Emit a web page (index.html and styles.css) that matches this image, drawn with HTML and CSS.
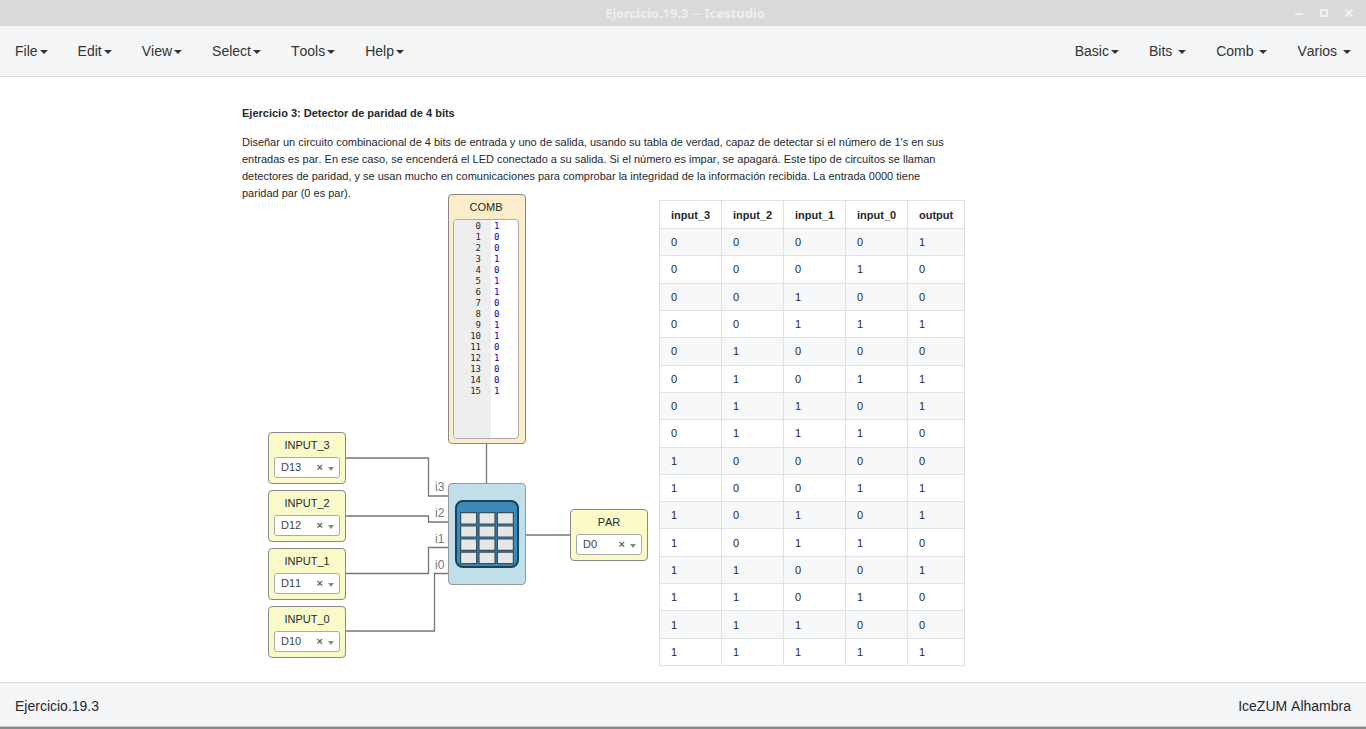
FILE: index.html
```html
<!DOCTYPE html>
<html lang="es">
<head>
<meta charset="utf-8">
<title>Ejercicio.19.3 ─ Icestudio</title>
<link rel="stylesheet" href="styles.css">
</head>
<body>
<header class="titlebar">
  <h1 class="titlebar-text">Ejercicio.19.3 ─ Icestudio</h1>
  <div class="window-controls">
    <button type="button" aria-label="Minimizar"><svg width="8" height="8" viewBox="0 0 8 8"><path d="M0 5h8" stroke="#f0f0f0" stroke-width="2"/></svg></button>
    <button type="button" aria-label="Maximizar"><svg width="8" height="8" viewBox="0 0 8 8"><rect x="1" y="1" width="6" height="6" fill="none" stroke="#f0f0f0" stroke-width="2"/></svg></button>
    <button type="button" aria-label="Cerrar"><svg width="8" height="8" viewBox="0 0 8 8"><path d="M.5.5l7 7M7.5.5L.5 7.500" stroke="#f0f0f0" stroke-width="2.200"/></svg></button>
  </div>
</header>
<nav class="menubar">
  <div class="menu-group">
    <button type="button" class="menu">File<span class="caret"></span></button>
    <button type="button" class="menu">Edit<span class="caret"></span></button>
    <button type="button" class="menu">View<span class="caret"></span></button>
    <button type="button" class="menu">Select<span class="caret"></span></button>
    <button type="button" class="menu">Tools<span class="caret"></span></button>
    <button type="button" class="menu">Help<span class="caret"></span></button>
  </div>
  <div class="menu-group">
    <button type="button" class="menu">Basic<span class="caret"></span></button>
    <button type="button" class="menu">Bits <span class="caret"></span></button>
    <button type="button" class="menu">Comb <span class="caret"></span></button>
    <button type="button" class="menu">Varios <span class="caret"></span></button>
  </div>
</nav>
<main class="canvas">
  <svg class="wires" aria-hidden="true">
    <path d="M345 381H428.500V419H449M345 439H428.500V445H449M345 496.500H428.500V470.500H449M345 554H434.500V496.500H449M486.500 367V407M525 458H571"/>
  </svg>

  <article class="note">
    <h2>Ejercicio 3: Detector de paridad de 4 bits</h2>
    <p>Diseñar un circuito combinacional de 4 bits de entrada y uno de salida, usando su tabla de verdad, capaz de detectar si el número de 1's en sus entradas es par. En ese caso, se encenderá el LED conectado a su salida. Si el número es impar, se apagará. Este tipo de circuitos se llaman detectores de paridad, y se usan mucho en comunicaciones para comprobar la integridad de la información recibida. La entrada 0000 tiene paridad par (0 es par).</p>
  </article>

  <section class="block memory">
    <label for="comb">COMB</label>
    <div class="editor">
      <pre class="gutter">0
1
2
3
4
5
6
7
8
9
10
11
12
13
14
15</pre>
      <textarea id="comb" spellcheck="false">1
0
0
1
0
1
1
0
0
1
1
0
1
0
0
1</textarea>
    </div>
  </section>

  <section class="block io input-3">
    <label for="in3">INPUT_3</label>
    <div class="pin"><select id="in3"><option>D13</option></select><button type="button" aria-label="Quitar D13">×</button><span class="arrow"></span></div>
  </section>
  <section class="block io input-2">
    <label for="in2">INPUT_2</label>
    <div class="pin"><select id="in2"><option>D12</option></select><button type="button" aria-label="Quitar D12">×</button><span class="arrow"></span></div>
  </section>
  <section class="block io input-1">
    <label for="in1">INPUT_1</label>
    <div class="pin"><select id="in1"><option>D11</option></select><button type="button" aria-label="Quitar D11">×</button><span class="arrow"></span></div>
  </section>
  <section class="block io input-0">
    <label for="in0">INPUT_0</label>
    <div class="pin"><select id="in0"><option>D10</option></select><button type="button" aria-label="Quitar D10">×</button><span class="arrow"></span></div>
  </section>
  <section class="block io output">
    <label for="par">PAR</label>
    <div class="pin"><select id="par"><option>D0</option></select><button type="button" aria-label="Quitar D0">×</button><span class="arrow"></span></div>
  </section>

  <ul class="ports"><li>i3</li><li>i2</li><li>i1</li><li>i0</li></ul>
  <section class="block part">
    <svg width="64" height="68" viewBox="0 0 64 68" role="img" aria-label="Tabla">
      <rect x="1" y="1" width="62" height="66" rx="7" fill="#3a8bba" stroke="#1c4259" stroke-width="2"/>
      <path d="M5 12.500H59V64H5Z" fill="#377fa9"/>
      <g fill="#e6e6e6" stroke="#35505f" stroke-width="1.200">
        <path d="M5.600 12.600h16v11.400h-16zM24 12.600h16v11.400h-16zM42.400 12.600h16v11.400h-16z"/>
        <path d="M5.600 25.800h16v11.400h-16zM24 25.800h16v11.400h-16zM42.400 25.800h16v11.400h-16z"/>
        <path d="M5.600 39h16v11.400h-16zM24 39h16v11.400h-16zM42.400 39h16v11.400h-16z"/>
        <path d="M5.600 52.200h16v11.400h-16zM24 52.200h16v11.400h-16zM42.400 52.200h16v11.400h-16z"/>
      </g>
    </svg>
  </section>

  <table class="truth">
    <thead><tr><th>input_3</th><th>input_2</th><th>input_1</th><th>input_0</th><th>output</th></tr></thead>
    <tbody>
      <tr><td>0</td><td>0</td><td>0</td><td>0</td><td>1</td></tr>
      <tr><td>0</td><td>0</td><td>0</td><td>1</td><td>0</td></tr>
      <tr><td>0</td><td>0</td><td>1</td><td>0</td><td>0</td></tr>
      <tr><td>0</td><td>0</td><td>1</td><td>1</td><td>1</td></tr>
      <tr><td>0</td><td>1</td><td>0</td><td>0</td><td>0</td></tr>
      <tr><td>0</td><td>1</td><td>0</td><td>1</td><td>1</td></tr>
      <tr><td>0</td><td>1</td><td>1</td><td>0</td><td>1</td></tr>
      <tr><td>0</td><td>1</td><td>1</td><td>1</td><td>0</td></tr>
      <tr><td>1</td><td>0</td><td>0</td><td>0</td><td>0</td></tr>
      <tr><td>1</td><td>0</td><td>0</td><td>1</td><td>1</td></tr>
      <tr><td>1</td><td>0</td><td>1</td><td>0</td><td>1</td></tr>
      <tr><td>1</td><td>0</td><td>1</td><td>1</td><td>0</td></tr>
      <tr><td>1</td><td>1</td><td>0</td><td>0</td><td>1</td></tr>
      <tr><td>1</td><td>1</td><td>0</td><td>1</td><td>0</td></tr>
      <tr><td>1</td><td>1</td><td>1</td><td>0</td><td>0</td></tr>
      <tr><td>1</td><td>1</td><td>1</td><td>1</td><td>1</td></tr>
    </tbody>
  </table>
</main>
<footer class="statusbar"><span>Ejercicio.19.3</span><span>IceZUM Alhambra</span></footer>
</body>
</html>
```
FILE: styles.css
```css
* { box-sizing: border-box; }

body {
  margin: 0;
  min-height: 100vh;
  display: flex;
  flex-direction: column;
  background: #fff;
  color: #24292e;
  font: 14px/20px "Liberation Sans", Arial, sans-serif;
  font-kerning: none;
}

button {
  border: 0;
  padding: 0;
  background: none;
  color: inherit;
  font: inherit;
  font-kerning: none;
}

/* Window frame */
.titlebar {
  display: grid;
  grid-template-columns: 1fr auto 1fr;
  align-items: center;
  height: 26px;
  padding: 0 13px 0 17px;
  background: #d9d9d9;
}
.titlebar-text {
  grid-column: 2;
  margin: 0;
  color: #eee;
  font: bold 13px/26px "Noto Sans", sans-serif;
}
.window-controls {
  display: flex;
  justify-content: flex-end;
  gap: 17px;
}
.window-controls button { display: flex; }

/* Menus */
.menubar {
  display: flex;
  justify-content: space-between;
  border-bottom: 1px solid #d5d9dd;
  background: #f4f5f7;
  color: #333;
}
.menu-group { display: flex; }
.menu {
  padding: 15px;
  white-space: pre;
}
.caret {
  display: inline-block;
  margin-left: 2px;
  vertical-align: middle;
  border-top: 4px solid;
  border-left: 4px solid transparent;
  border-right: 4px solid transparent;
}

/* Free canvas: nodes carry their own coordinates */
.canvas {
  position: relative;
  flex: 1;
  min-height: 600px;
  font-size: 11px;
}
.wires {
  position: absolute;
  top: 0;
  left: 0;
  width: 100%;
  height: 100%;
  fill: none;
  stroke: #777;
  stroke-width: 1.300;
}
.note {
  position: absolute;
  top: 28px;
  left: 242px;
  width: 712px;
  line-height: 17px;
}
.note h2 {
  margin: 0 0 12px;
  font-size: 11px;
}
.note p { margin: 0; }

.block {
  position: absolute;
  width: 78px;
  border: 1px solid #888;
  border-radius: 4px;
}
.block label {
  display: block;
  line-height: 24px;
  text-align: center;
}
.io {
  height: 52px;
  padding: 0 5px;
  background: #fafac8;
}
.input-3 { top: 355px; left: 268px; }
.input-2 { top: 413px; left: 268px; }
.input-1 { top: 471px; left: 268px; }
.input-0 { top: 529px; left: 268px; }
.output { top: 432px; left: 570px; }

.pin {
  display: flex;
  align-items: center;
  height: 21px;
  padding: 0 5px 1px 6px;
  border: 1px solid #aaa;
  border-radius: 3px;
  background: #fff;
  color: #444;
}
.pin select {
  flex: 1;
  min-width: 0;
  padding: 0;
  border: 0;
  appearance: none;
  background: none;
  color: inherit;
  font: inherit;
  font-kerning: none;
}
.pin button {
  margin-right: 5px;
  color: #666;
  font-weight: bold;
}
.arrow {
  margin-top: 4px;
  border-top: 4px solid #888;
  border-left: 3px solid transparent;
  border-right: 3px solid transparent;
}

.memory {
  top: 117px;
  left: 448px;
  height: 250px;
  padding: 0 6px 4px 4px;
  display: flex;
  flex-direction: column;
  background: #fbedc9;
}
.editor {
  flex: 1;
  display: flex;
  overflow: hidden;
  border: 1px solid #aaa;
  border-radius: 4px;
  background: #fff;
}
.gutter,
.editor textarea {
  margin: 0;
  border: 0;
  font: 9px/11px "DejaVu Sans Mono", monospace;
}
.gutter {
  width: 37px;
  padding: 1px 10px 0 0;
  background: #eee;
  text-align: right;
}
.editor textarea {
  flex: 1;
  min-width: 0;
  padding: 1px 3px 0;
  resize: none;
  overflow: hidden;
  background: none;
  color: #00b;
}

.ports {
  position: absolute;
  top: 400px;
  left: 435px;
  display: grid;
  gap: 6px;
  margin: 0;
  padding: 0;
  list-style: none;
  color: #777;
  font-size: 12px;
}
.part {
  top: 406px;
  left: 448px;
  height: 102px;
  padding-bottom: 1px;
  display: flex;
  align-items: center;
  justify-content: center;
  border-color: #999;
  background: #c0dfea;
}

.truth {
  position: absolute;
  top: 123px;
  left: 659px;
  width: 306px;
  height: 466px;
  border-collapse: collapse;
  table-layout: fixed;
}
.truth th,
.truth td {
  padding: 0 0 0 11px;
  border: 1px solid #dfe2e5;
  text-align: left;
}
.truth th {
  width: 62px;
  height: 28px;
}
.truth th:last-child { width: 57px; }
.truth tbody tr:nth-child(odd) { background: #f6f8fa; }

.statusbar {
  display: flex;
  justify-content: space-between;
  height: 47px;
  padding: 13px 15px;
  border-top: 1px solid #d5d9dd;
  border-bottom: 2px solid #8c8c8c;
  box-shadow: inset 0 -1px #c4c4c4;
  background: #f4f5f7;
}
```
